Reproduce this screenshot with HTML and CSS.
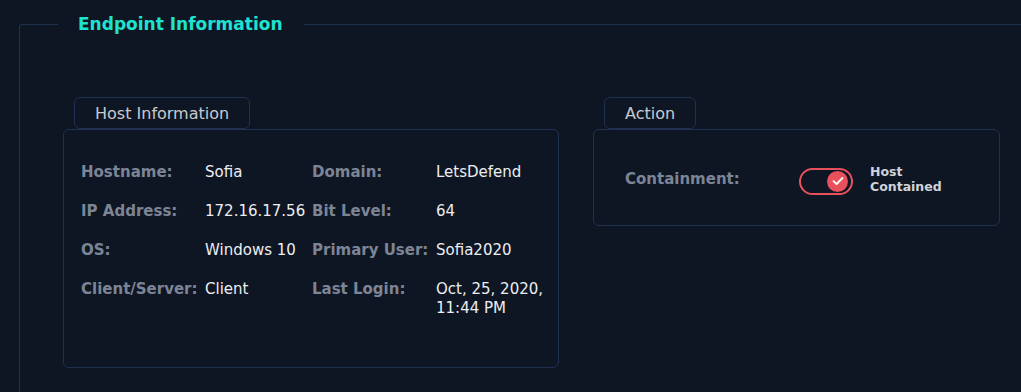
FILE: index.html
```html
<!DOCTYPE html>
<html lang="en">
    <head>
        <meta charset="UTF-8" />
        <meta name="viewport" content="width=device-width, initial-scale=1.0" />
        <title>Endpoint Information</title>
        <link rel="stylesheet" href="styles.css">
    </head>
    <body>
        <fieldset class="endpoint">
            <legend>Endpoint Information</legend>
            <div class="columns">
                <div class="section">
                    <div class="tab">Host Information</div>
                    <div class="panel host-panel">
                        <div class="info-grid">
                            <span class="label">Hostname:</span>
                            <span class="value">Sofia</span>
                            <span class="label">Domain:</span>
                            <span class="value">LetsDefend</span>

                            <span class="label">IP Address:</span>
                            <span class="value">172.16.17.56</span>
                            <span class="label">Bit Level:</span>
                            <span class="value">64</span>

                            <span class="label">OS:</span>
                            <span class="value">Windows 10</span>
                            <span class="label">Primary User:</span>
                            <span class="value">Sofia2020</span>

                            <span class="label">Client/Server:</span>
                            <span class="value">Client</span>
                            <span class="label">Last Login:</span>
                            <span class="value">Oct, 25, 2020, 11:44 PM</span>
                        </div>
                    </div>
                </div>
                <div class="section">
                    <div class="tab">Action</div>
                    <div class="panel action-panel">
                        <span class="label containment">Containment:</span>
                        <label class="toggle">
                            <input type="checkbox" checked />
                            <span class="knob">
                                <svg width="12" height="10" viewBox="0 0 12 10">
                                    <polyline points="1.5,5.2 4.6,8 10.5,2" fill="none" stroke="#fff" stroke-width="1.8" stroke-linecap="round" stroke-linejoin="round" />
                                </svg>
                            </span>
                        </label>
                        <span class="status">Host<br />Contained</span>
                    </div>
                </div>
            </div>
        </fieldset>
    </body>
</html>
```

FILE: styles.css
```css
body {
    margin: 0;
    background-color: #0f1623;
    font-family: 'DejaVu Sans', 'Liberation Sans', sans-serif;
    overflow: hidden;
    height: 100vh;
}

.endpoint {
    margin: 13px 0 0 19px;
    padding: 0;
    width: calc(100% - 19px);
    height: calc(100vh - 13px);
    min-inline-size: 0;
    box-sizing: border-box;
    border: 1px solid #1e3150;
    border-right: none;
    border-bottom: none;
    border-radius: 3px 0 0 0;
}

.endpoint legend {
    margin-left: 38px;
    padding: 0 21px 0 20px;
    font-size: 17px;
    font-weight: bold;
    line-height: 22px;
    color: #1fe2d0;
}

.columns {
    display: flex;
    gap: 34px;
    padding: 62px 0 0 43px;
}

.section {
    display: flex;
    flex-direction: column;
    align-items: flex-start;
}

.tab {
    margin-left: 11px;
    padding: 0 20px;
    height: 32px;
    line-height: 32px;
    box-sizing: border-box;
    border: 1px solid #1f3050;
    border-radius: 6px;
    font-size: 16px;
    color: #c6cad1;
}

.panel {
    border: 1px solid #1f3050;
    border-radius: 6px;
    box-sizing: border-box;
}

.host-panel {
    width: 496px;
    height: 239px;
    padding: 33px 4px 0 17px;
}

.info-grid {
    display: grid;
    grid-template-columns: 124px 107px 124px auto;
    row-gap: 20px;
    font-size: 15px;
    line-height: 19px;
}

.label {
    font-weight: bold;
    color: #7c8596;
}

.value {
    color: #eceef1;
}

.action-panel {
    width: 407px;
    height: 97px;
    padding: 3px 0 0 31px;
    display: flex;
    align-items: center;
}

.containment {
    width: 174px;
    font-size: 15px;
    line-height: 19px;
}

.toggle {
    display: flex;
    align-items: center;
    justify-content: flex-end;
    width: 54px;
    height: 27px;
    padding: 0 3px;
    box-sizing: border-box;
    border: 2px solid #e8505b;
    border-radius: 14px;
    margin-top: 4px;
    cursor: pointer;
}

.toggle input {
    display: none;
}

.knob {
    display: flex;
    align-items: center;
    justify-content: center;
    width: 21px;
    height: 21px;
    border-radius: 50%;
    background-color: #e8505b;
}

.status {
    margin-left: 17px;
    font-size: 12.5px;
    font-weight: bold;
    line-height: 15px;
    color: #cfd3da;
}
```
